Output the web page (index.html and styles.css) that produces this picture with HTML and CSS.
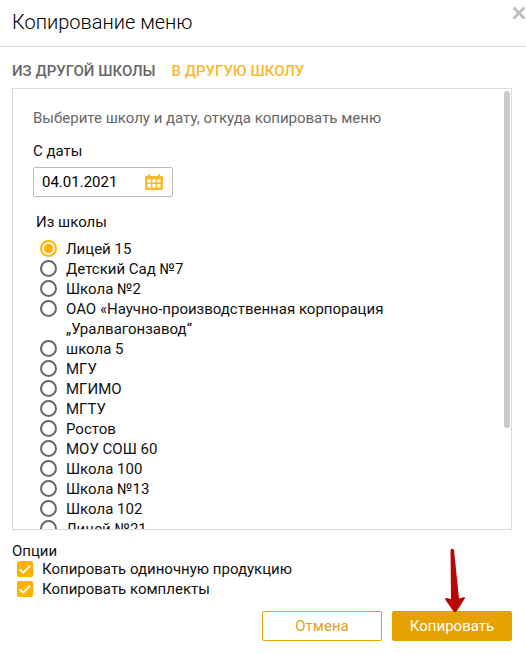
FILE: index.html
```html
<!DOCTYPE html>
<html lang="ru">
<head>
    <meta charset="UTF-8">
    <meta name="viewport" content="width=device-width, initial-scale=1.0">
    <title>Копирование меню</title>
    <link rel="stylesheet" href="styles.css">
</head>
<body>

    <div class="modal">
        <!-- Header -->
        <div class="modal-header">
            <div class="modal-title">Копирование меню</div>
            <svg class="close-button" width="14" height="14" viewBox="0 0 14 14">
                <path d="M1.500 1.500l11 11M12.500 1.500l-11 11" stroke="#bdbdbd" stroke-width="2.800" fill="none"/>
            </svg>
        </div>

        <!-- Tabs -->
        <div class="tabs">
            <div class="tab">ИЗ ДРУГОЙ ШКОЛЫ</div>
            <div class="tab active">В ДРУГУЮ ШКОЛУ</div>
        </div>

        <!-- Scrollable panel -->
        <div class="panel">
            <div class="panel-content">
                <div class="hint">Выберите школу и дату, откуда копировать меню</div>
                <div class="label">С даты</div>
                <div class="date-input">
                    <span>04.01.2021</span>
                    <svg width="18" height="16" viewBox="0 0 18 16">
                        <path fill="#fbb829" fill-rule="evenodd" d="M1 2h2V1q0-1 1-1t1 1v1h8V1q0-1 1-1t1 1v1h2q1 0 1 1v12q0 1-1 1H1q-1 0-1-1V3q0-1 1-1zM2.500 5.500v3h3.500v-3zM7.300 5.500v3h3.400v-3zM12 5.500v3h3.500v-3zM2.500 10v3.500h3.500v-3.500zM7.300 10v3.500h3.400v-3.500zM12 10v3.500h3.500v-3.500z"/>
                    </svg>
                </div>
                <div class="list-title">Из школы</div>
                <div class="school-list">
                    <div class="school"><span class="radio checked"></span><span>Лицей 15</span></div>
                    <div class="school"><span class="radio"></span><span>Детский Сад №7</span></div>
                    <div class="school"><span class="radio"></span><span>Школа №2</span></div>
                    <div class="school"><span class="radio"></span><span>ОАО «Научно-производственная корпорация<br>„Уралвагонзавод“</span></div>
                    <div class="school"><span class="radio"></span><span>школа 5</span></div>
                    <div class="school"><span class="radio"></span><span>МГУ</span></div>
                    <div class="school"><span class="radio"></span><span>МГИМО</span></div>
                    <div class="school"><span class="radio"></span><span>МГТУ</span></div>
                    <div class="school"><span class="radio"></span><span>Ростов</span></div>
                    <div class="school"><span class="radio"></span><span>МОУ СОШ 60</span></div>
                    <div class="school"><span class="radio"></span><span>Школа 100</span></div>
                    <div class="school"><span class="radio"></span><span>Школа №13</span></div>
                    <div class="school"><span class="radio"></span><span>Школа 102</span></div>
                    <div class="school"><span class="radio"></span><span>Лицей №21</span></div>
                </div>
            </div>
            <div class="scroll-thumb"></div>
        </div>

        <!-- Options -->
        <div class="options">
            <div class="options-title">Опции</div>
            <div class="option">
                <svg class="checkbox" width="16" height="16" viewBox="0 0 16 16">
                    <rect width="16" height="16" rx="2" fill="#ffb300"/>
                    <path d="M2.800 8.300l3.400 3.400 7-7" stroke="#fff" stroke-width="1.700" fill="none"/>
                </svg>
                <span>Копировать одиночную продукцию</span>
            </div>
            <div class="option">
                <svg class="checkbox" width="16" height="16" viewBox="0 0 16 16">
                    <rect width="16" height="16" rx="2" fill="#ffb300"/>
                    <path d="M2.800 8.300l3.400 3.400 7-7" stroke="#fff" stroke-width="1.700" fill="none"/>
                </svg>
                <span>Копировать комплекты</span>
            </div>
        </div>

        <!-- Buttons -->
        <div class="buttons">
            <button class="button cancel">Отмена</button>
            <button class="button submit">Копировать</button>
        </div>

        <!-- Red pointer over the submit button -->
        <svg class="arrow" width="20" height="65" viewBox="0 0 20 65">
            <path d="M5.500 2Q7.300-.5 9 2L14 50.500 19.500 49q.8 1 0 2L11.500 63.500q-1.500 1.500-3 0L.5 52q-.8-2 1-2l4.500 1z" fill="#b90504"/>
        </svg>
    </div>

</body>
</html>
```
FILE: styles.css
```css
* {
    box-sizing: border-box;
}

body {
    font-family: Roboto, sans-serif;
    font-size: 15px;
    line-height: 20px;
    margin: 0;
    color: #111;
    background-color: #fff;
}

.modal {
    position: relative; /* Required for positioning of the arrow */
    height: 654px;
    overflow: hidden;
}

.modal-header {
    display: flex;
    justify-content: space-between;
    height: 47px;
    padding: 6px 0 0 12px;
    border-bottom: 1px solid #dadada;
}

.modal-title {
    font-size: 20px;
    font-weight: 300;
    line-height: 32px;
    color: #000;
}

.tabs {
    display: flex;
    gap: 16px;
    padding: 14px 12px 7px;
    font-weight: 500;
    color: #666;
}

.tab.active {
    color: #fbb829;
}

.panel {
    display: flex;
    justify-content: space-between;
    height: 442px;
    margin: 0 14px 0 12px;
    padding-right: 1px;
    border: 1px solid #dadada;
    overflow: hidden;
}

.panel-content {
    padding: 19px 0 0 20px;
}

.hint {
    color: #666;
}

.label {
    margin-top: 13px;
}

.date-input {
    display: flex;
    justify-content: space-between;
    align-items: center;
    width: 140px;
    height: 30px;
    margin-top: 6px;
    padding: 0 9px 0 8px;
    border: 1px solid #bdbdbd;
    border-radius: 2px;
    color: #000;
}

.list-title {
    margin: 15px 0 7px 3px;
}

.school-list {
    padding-left: 7px;
}

.school {
    display: flex;
    gap: 9px;
}

.radio {
    flex-shrink: 0;
    width: 17px;
    height: 17px;
    margin-top: 1px;
    border: 2px solid #666;
    border-radius: 50%;
}

.radio.checked {
    border-color: #ffb300;
    background: radial-gradient(circle, #ffb300 4.2px, #fff 5px);
}

.scroll-thumb {
    width: 6px;
    height: 337px;
    margin-top: 2px;
    border-radius: 3px;
    background-color: #cacaca;
}

.options {
    padding: 14px 12px 0;
}

.options-title {
    line-height: 15px;
}

.option {
    display: flex;
    align-items: center;
    gap: 9px;
    padding-left: 5px;
}

.buttons {
    display: flex;
    justify-content: flex-end;
    gap: 10px;
    padding: 12px 14px 0 0;
}

.button {
    width: 120px;
    height: 30px;
    padding: 0;
    border: 1px solid #e5a200;
    border-radius: 2px;
    font-family: inherit;
    font-size: 15px;
}

.cancel {
    background-color: #fff;
    color: #e0a21a;
}

.submit {
    background-color: #e5a200;
    color: #fff;
}

.arrow {
    position: absolute;
    left: 445px;
    top: 548px;
}
```
